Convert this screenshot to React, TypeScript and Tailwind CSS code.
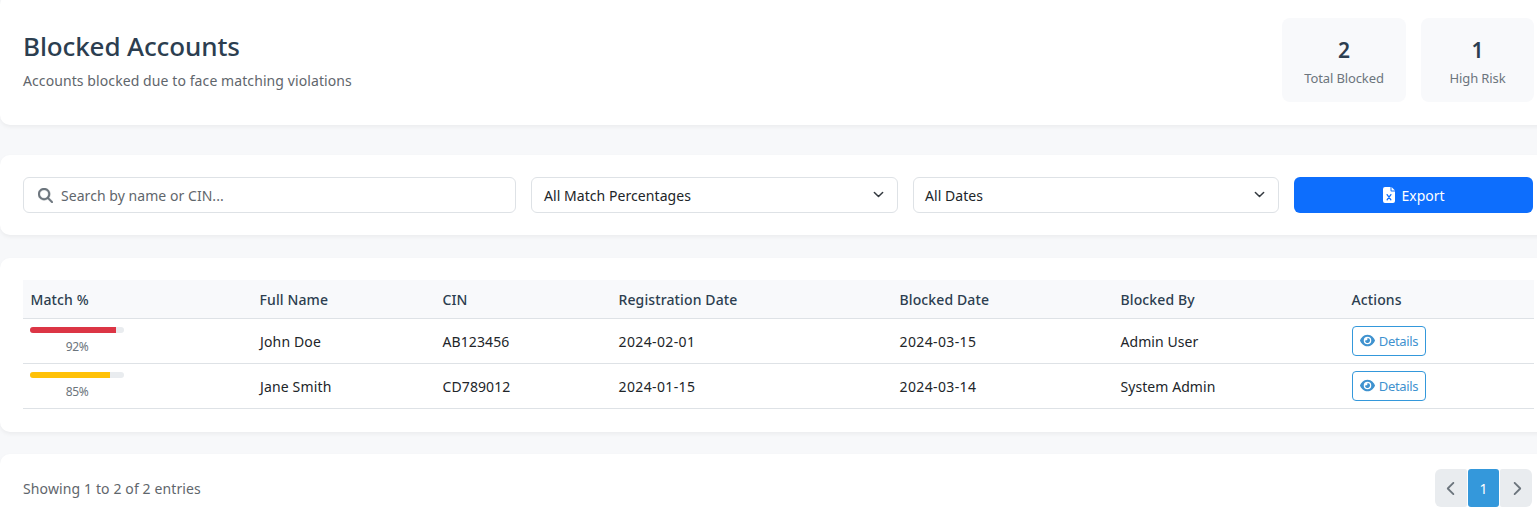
import type { ReactNode } from 'react';
import { FaMagnifyingGlass, FaEye, FaChevronLeft, FaChevronRight } from 'react-icons/fa6';

interface Account {
  match: number;
  name: string;
  cin: string;
  registered: string;
  blocked: string;
  by: string;
}

const accounts: Account[] = [
  { match: 92, name: 'John Doe', cin: 'AB123456', registered: '2024-02-01', blocked: '2024-03-15', by: 'Admin User' },
  { match: 85, name: 'Jane Smith', cin: 'CD789012', registered: '2024-01-15', blocked: '2024-03-14', by: 'System Admin' },
];

const columns = ['Match %', 'Full Name', 'CIN', 'Registration Date', 'Blocked Date', 'Blocked By', 'Actions'];

function Card({ className, children }: { className: string; children: ReactNode }) {
  return (
    <section className={`w-[1557px] rounded-[10px] bg-white pl-[23px] shadow-[0_2px_4px_rgba(0,0,0,0.05)] ${className}`}>
      {children}
    </section>
  );
}

function Stat({ value, label, className }: { value: number; label: string; className: string }) {
  return (
    <div className={`flex h-[84px] flex-col items-center rounded-lg bg-[#f8f9fb] pt-[17px] ${className}`}>
      <div className="text-[21px] leading-[30px] font-semibold text-[#2c3e50]">{value}</div>
      <div className="mt-[3px] text-[13px] leading-5 tracking-[-0.12px] whitespace-nowrap text-[#6c757d]">{label}</div>
    </div>
  );
}

function Select({ label, className }: { label: string; className: string }) {
  return (
    <button className={`flex h-9 items-center justify-between rounded-md border border-[#dee2e6] pr-[13px] text-[#212529] ${className}`}>
      <span className="pt-px">{label}</span>
      <svg className="mb-px size-[11px]" viewBox="0 0 16 16" fill="none" stroke="#343a40" strokeWidth="2.2" strokeLinecap="round" strokeLinejoin="round">
        <path d="m2 5 6 6 6-6" />
      </svg>
    </button>
  );
}

function ExcelFileIcon({ className }: { className: string }) {
  return (
    <svg className={className} viewBox="0 0 12 16">
      <path d="M2 0h5.5v3.5a1 1 0 0 0 1 1H12V14a2 2 0 0 1-2 2H2a2 2 0 0 1-2-2V2a2 2 0 0 1 2-2Z" fill="#fff" />
      <path d="M8.5 0 12 3.5H8.5Z" fill="#fff" />
      <path d="m4.1 7.6 3.8 5.2M7.9 7.6l-3.8 5.2" stroke="#0d6efd" strokeWidth="1.3" strokeLinecap="round" />
    </svg>
  );
}

export default function App() {
  return (
    <main className="h-[515px] w-full overflow-hidden bg-[#f7f8fa] font-['Noto_Sans',sans-serif] text-[14px] leading-[22px] tracking-[0.06px] text-[#212529]">
      <Card className="-mt-[5px] flex h-[130px] justify-between pt-[23px] pr-[23px]">
        <div>
          <h1 className="mt-[11px] text-[26px] leading-[34px] font-medium tracking-[-0.12px] text-[#2c3e50]">Blocked Accounts</h1>
          <p className="mt-[7px] tracking-[0.09px] text-[#5f666c]">Accounts blocked due to face matching violations</p>
        </div>
        <div className="flex gap-[15px]">
          <Stat value={2} label="Total Blocked" className="w-[124px]" />
          <Stat value={1} label="High Risk" className="w-[113px]" />
        </div>
      </Card>

      <Card className="mt-[30px] flex h-20 gap-[15px] pt-[22px] pr-[23px]">
        <label className="flex h-9 w-[493px] items-center rounded-md border border-[#dee2e6] pl-[14px]">
          <FaMagnifyingGlass className="size-[15px] text-[#6c757d]" stroke="currentColor" strokeWidth={12} />
          <input
            className="ml-[8px] w-[400px] pt-px tracking-[0.05px] outline-none placeholder:text-[#5f666c]"
            placeholder="Search by name or CIN..."
          />
        </label>
        <Select label="All Match Percentages" className="w-[367px] pl-3" />
        <Select label="All Dates" className="w-[366px] pl-[11px]" />
        <button className="flex h-9 w-[239px] items-center justify-center rounded-md bg-[#0d6efd] tracking-[-0.05px] text-white">
          <ExcelFileIcon className="mr-[7px] h-4 w-3" />
          <span className="pt-px">Export</span>
        </button>
      </Card>

      <Card className="mt-[23px] h-[174px] pt-[22px] pr-[23px]">
        <table className="w-[1511px] table-fixed border-collapse text-left">
          <colgroup>
            <col className="w-[229px]" />
            <col className="w-[183px]" />
            <col className="w-[176px]" />
            <col className="w-[281px]" />
            <col className="w-[221px]" />
            <col className="w-[231px]" />
            <col className="w-[190px]" />
          </colgroup>
          <thead>
            <tr className="h-[38px] border-b border-[#dee2e6] bg-[#f8f9fb] text-[#2c3e50]">
              {columns.map((c) => (
                <th key={c} className="px-[7.5px] pt-0.5 font-medium tracking-[0.12px]">{c}</th>
              ))}
            </tr>
          </thead>
          <tbody>
            {accounts.map((a) => (
              <tr key={a.cin} className="h-[45px] border-b border-[#dee2e6]">
                <td className="px-[7px]">
                  <div className="w-[94px]">
                    <div className="h-1.5 overflow-hidden rounded-[3px] bg-[#e9ecef]">
                      <div className={`h-full ${a.match >= 90 ? 'bg-[#dc3545]' : 'bg-[#ffc107]'}`} style={{ width: `${a.match}%` }} />
                    </div>
                    <div className="mt-[5px] text-center text-[12px] leading-[17px] tracking-[-0.4px] text-[#6c757d]">{a.match}%</div>
                  </div>
                </td>
                <td className="px-2 pt-[3px] tracking-[0.15px]">{a.name}</td>
                <td className="px-[7.5px] pt-[3px] tracking-[0.1px]">{a.cin}</td>
                <td className="px-[7.5px] pt-[3px] tracking-[0.38px]">{a.registered}</td>
                <td className="px-[7.5px] pt-[3px] tracking-[0.38px]">{a.blocked}</td>
                <td className="px-[7.5px] pt-[3px]">{a.by}</td>
                <td className="px-2">
                  <button className="flex h-[30px] w-[74px] items-center justify-center rounded border border-[#3498db] text-[13px] tracking-[-0.35px] text-[#3f92cf]">
                    <FaEye className="mr-1 size-[15px]" />
                    Details
                  </button>
                </td>
              </tr>
            ))}
          </tbody>
        </table>
      </Card>

      <Card className="mt-[22px] flex h-[80px] justify-between pt-[15px] pr-[25px]">
        <p className="mt-[9px] tracking-[0.12px] text-[#5f666c]">Showing 1 to 2 of 2 entries</p>
        <nav className="flex h-[38px] gap-px text-[#6c757d]">
          <button className="flex w-8 items-center justify-center rounded-l-md rounded-r-xs bg-[#e9ecef]">
            <FaChevronLeft className="size-[15px]" />
          </button>
          <button className="w-[31px] rounded-[3px] bg-[#3498db] pt-px text-white">1</button>
          <button className="flex w-8 items-center justify-center rounded-l-xs rounded-r-md bg-[#e9ecef]">
            <FaChevronRight className="size-[15px]" />
          </button>
        </nav>
      </Card>
    </main>
  );
}
